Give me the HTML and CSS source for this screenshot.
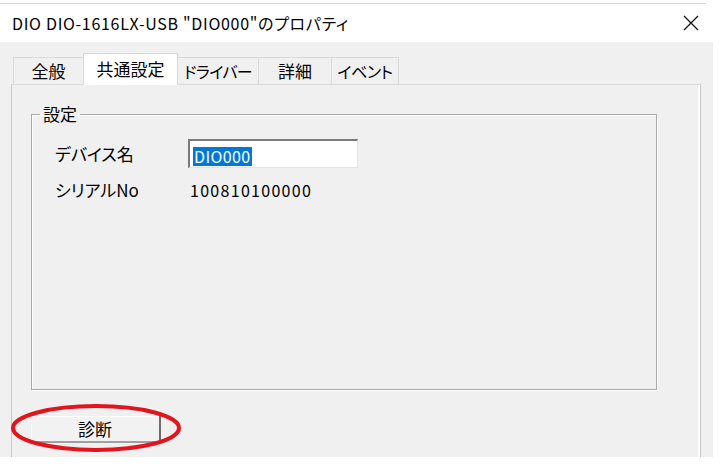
FILE: index.html
```html
<!DOCTYPE html>
<html lang="ja">
<head>
    <meta charset="UTF-8">
    <title>DIO DIO-1616LX-USB "DIO000"のプロパティ</title>
    <link rel="stylesheet" href="styles.css">
</head>
<body>
    <div class="window">
        <div class="titlebar">
            <span class="title">DIO DIO-1616LX-USB "DIO000"のプロパティ</span>
            <svg class="close" width="16" height="16" viewBox="0 0 16 16">
                <path d="M1 1 L15 15 M15 1 L1 15" stroke="#111" stroke-width="1.3" fill="none"/>
            </svg>
        </div>
        <div class="client">
            <div class="tabs">
                <div class="tab t1">全般</div>
                <div class="tab t2 active">共通設定</div>
                <div class="tab t3">ドライバー</div>
                <div class="tab t4">詳細</div>
                <div class="tab t5">イベント</div>
            </div>
            <div class="panel">
                <fieldset class="group">
                    <legend>設定</legend>
                    <div class="fields">
                        <div class="label">デバイス名</div>
                        <div class="textbox"><span class="sel">DIO000</span></div>
                        <div class="label">シリアルNo</div>
                        <div class="value">100810100000</div>
                    </div>
                </fieldset>
                <div class="action">
                    <button class="btn">診断</button>
                    <!-- red mark around the button -->
                    <svg class="mark" width="172" height="50" viewBox="0 0 172 50">
                        <ellipse cx="86" cy="25" rx="83" ry="22" fill="none" stroke="#e3141b" stroke-width="4"/>
                    </svg>
                </div>
            </div>
        </div>
    </div>
</body>
</html>
```

FILE: styles.css
```css
body {
    margin: 0;
    background: #fff;
    font-family: "Noto Sans CJK JP", sans-serif;
    font-feature-settings: "palt";
    color: #000;
}
.window {
    width: 713px;
}
.titlebar {
    margin-top: 3px;
    height: 38px;
    border-top: 1px solid #d8d8d8;
    width: 706px;
    box-sizing: content-box;
    display: flex;
    align-items: center;
    justify-content: space-between;
    padding: 0;
    background: #fff;
}
.title {
    margin-left: 12px;
    font-size: 16px;
    letter-spacing: 0.7px;
}
.close {
    margin-right: 7px;
}
.client {
    background: #f0f0f0;
    height: 415px;
    padding: 11px 12px 0 11px;
    box-sizing: border-box;
    overflow: hidden;
}
.tabs {
    display: flex;
    align-items: flex-end;
    padding-left: 2px;
    height: 31px;
    position: relative;
    z-index: 1;
}
.tab {
    height: 27px;
    box-sizing: border-box;
    border: 1px solid #d9d9d9;
    border-bottom: none;
    border-right: none;
    background: #f0f0f0;
    font-size: 17px;
    line-height: 26px;
    text-align: center;
    white-space: nowrap;
}
.tab.t5 {
    border-right: 1px solid #d9d9d9;
}
.tab.active {
    height: 32px;
    margin-bottom: -1px;
    background: #fff;
    border-right: 1px solid #d9d9d9;
    line-height: 29px;
}
.tab.active + .tab {
    border-left: none;
}
.t1 { width: 70px; }
.t2 { width: 95px; }
.t3 { width: 80px; font-size: 16px; letter-spacing: -0.6px; }
.t4 { width: 73px; }
.t5 { width: 68px; font-size: 16px; letter-spacing: -0.4px; }
.panel {
    height: 400px;
    border: 1px solid #c9c9c9;
    border-top-color: #d9d9d9;
    box-shadow: inset -2px 0 0 #fff;
    background: #f0f0f0;
}
.group {
    margin: 19px 0 0 19px;
    width: 626px;
    height: 286px;
    box-sizing: border-box;
    padding: 0;
    border: 1px solid #a9a9a9;
    box-shadow: 1px 1px 0 #fff, inset 1px 1px 0 #fff;
}
.group legend {
    margin-left: 8px;
    padding: 0 3px;
    font-size: 17px;
    line-height: 20px;
}
.fields {
    display: grid;
    grid-template-columns: 133px 170px;
    row-gap: 9px;
    align-items: center;
    padding: 15px 0 0 23px;
    font-size: 17px;
}
.textbox {
    height: 29px;
    box-sizing: border-box;
    background: #fff;
    border-top: 2px solid #7a7a7a;
    border-left: 2px solid #7a7a7a;
    border-right: 1px solid #e3e3e3;
    border-bottom: 1px solid #e3e3e3;
    padding: 2px 0 0 3px;
}
.sel {
    display: inline-block;
    background: #0078d7;
    color: #fff;
    font-size: 16px;
    line-height: 19px;
    padding: 0 1px;
    letter-spacing: 0.4px;
}
.value {
    padding-left: 2px;
    font-size: 16px;
    letter-spacing: 1.3px;
    line-height: 22px;
}
.action {
    position: relative;
    margin: 26px 0 0 19px;
    width: 130px;
}
.btn {
    display: block;
    width: 130px;
    height: 27px;
    padding: 0;
    background: #f2f2f2;
    border: none;
    border-right: 2px solid #6d6d6d;
    border-bottom: 2px solid #a0a0a0;
    box-shadow: inset 1px 1px 0 #fff;
    font-family: "Noto Sans CJK JP", sans-serif;
    font-size: 17px;
    color: #000;
}
.mark {
    position: absolute;
    left: -21px;
    top: -13px;
}
```
